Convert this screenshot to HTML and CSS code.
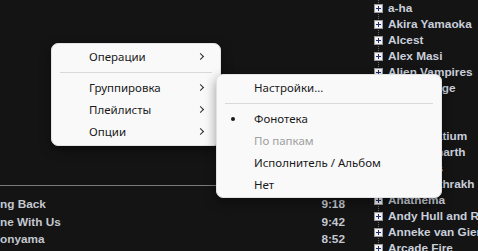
FILE: index.html
```html
<!DOCTYPE html>
<html lang="ru">
<head>
    <meta charset="UTF-8">
    <title>Фонотека</title>
    <link rel="stylesheet" href="styles.css">
</head>
<body>
    <div class="player">
        <div class="tracks">
            <div class="tracks-top"></div>
            <div class="track-row"><span class="track-title">ng Back</span><span class="track-time">9:18</span></div>
            <div class="track-row"><span class="track-title">ne With Us</span><span class="track-time">9:42</span></div>
            <div class="track-row"><span class="track-title">onyama</span><span class="track-time">8:52</span></div>
        </div>

        <div class="tree">
            <div class="tree-row"><span class="expander"></span>a-ha</div>
            <div class="tree-row"><span class="expander"></span>Akira Yamaoka</div>
            <div class="tree-row"><span class="expander"></span>Alcest</div>
            <div class="tree-row"><span class="expander"></span>Alex Masi</div>
            <div class="tree-row"><span class="expander"></span>Alien Vampires</div>
            <div class="tree-row"><span class="expander"></span>Alter Bridge</div>
            <div class="tree-row"><span class="expander"></span>Amatory</div>
            <div class="tree-row"><span class="expander"></span>Ambeon</div>
            <div class="tree-row"><span class="expander"></span>Amber Latium</div>
            <div class="tree-row"><span class="expander"></span>Amon Amarth</div>
            <div class="tree-row"><span class="expander"></span>Amorphis</div>
            <div class="tree-row"><span class="expander"></span>Anaal Nathrakh</div>
            <div class="tree-row"><span class="expander"></span>Anathema</div>
            <div class="tree-row"><span class="expander"></span>Andy Hull and Robert McDowell</div>
            <div class="tree-row"><span class="expander"></span>Anneke van Giersbergen</div>
            <div class="tree-row"><span class="expander"></span>Arcade Fire</div>
        </div>
    </div>

    <div class="menu menu-main">
        <div class="menu-item">Операции<span class="chevron"></span></div>
        <div class="menu-sep"></div>
        <div class="menu-item">Группировка<span class="chevron"></span></div>
        <div class="menu-item">Плейлисты<span class="chevron"></span></div>
        <div class="menu-item">Опции<span class="chevron"></span></div>
    </div>

    <div class="menu menu-sub">
        <div class="menu-item">Настройки...</div>
        <div class="menu-sep"></div>
        <div class="menu-item checked">Фонотека</div>
        <div class="menu-item disabled">По папкам</div>
        <div class="menu-item">Исполнитель / Альбом</div>
        <div class="menu-item">Нет</div>
    </div>
</body>
</html>
```

FILE: styles.css
```css
body {
    margin: 0;
    padding: 0;
    background-color: #141414;
    width: 478px;
    height: 251px;
    overflow: hidden;
    position: relative;
}

.player {
    display: flex;
    height: 100%;
}

.tracks {
    width: 360px;
    flex-shrink: 0;
    display: flex;
    flex-direction: column;
    font-family: "Liberation Sans", Arial, sans-serif;
    font-weight: bold;
    font-size: 11.8px;
    color: #c3c7cf;
}

.tracks-top {
    height: 185px;
    border-bottom: 1px solid #7a7a7a;
    margin-bottom: 10px;
    margin-right: 10px;
}

.track-row {
    display: flex;
    justify-content: space-between;
    height: 17.5px;
    line-height: 17.5px;
    padding-right: 15px;
}

.tree {
    flex: 1;
    min-width: 0;
    overflow: hidden;
    position: relative;
    padding-left: 14px;
    font-family: "Liberation Sans", Arial, sans-serif;
    font-weight: bold;
    font-size: 11.8px;
    color: #c9cfdb;
    white-space: nowrap;
}

.tree::before {
    content: '';
    position: absolute;
    left: 18px;
    top: 0;
    bottom: 0;
    border-left: 1px dotted #6a6a6a;
}

.tree-row {
    position: relative;
    display: flex;
    align-items: center;
    height: 16px;
    gap: 5px;
}

.expander {
    position: relative;
    width: 7px;
    height: 7px;
    border: 1px solid #9a9a9a;
    background-color: #f2f2f2;
    flex-shrink: 0;
}

.expander::before,
.expander::after {
    content: '';
    position: absolute;
    background-color: #1c2f6e;
}

.expander::before {
    left: 1px;
    top: 3px;
    width: 5px;
    height: 1px;
}

.expander::after {
    left: 3px;
    top: 1px;
    width: 1px;
    height: 5px;
}

.menu {
    position: absolute;
    box-sizing: border-box;
    background-color: #f9f9f9;
    border: 1px solid #e3e3e3;
    border-radius: 7px;
    padding: 2px 0;
    font-family: "Noto Sans", "Open Sans", sans-serif;
    font-size: 11.5px;
    color: #1a1a1a;
    box-shadow: 0 4px 12px rgba(0, 0, 0, 0.4);
}

.menu-main {
    left: 51px;
    top: 43px;
    width: 170px;
    height: 103px;
}

.menu-sub {
    left: 216px;
    top: 74px;
    width: 226px;
    height: 124px;
}

.menu-item {
    position: relative;
    height: 22px;
    line-height: 22px;
    padding-left: 37px;
}

.menu-item.disabled {
    color: #a0a0a0;
}

.menu-item.checked::before {
    content: '';
    position: absolute;
    left: 14px;
    top: 9px;
    width: 4px;
    height: 4px;
    border-radius: 50%;
    background-color: #1a1a1a;
}

.chevron {
    position: absolute;
    right: 17px;
    top: 8px;
    width: 4px;
    height: 4px;
    border-top: 1px solid #2a2a2a;
    border-right: 1px solid #2a2a2a;
    transform: rotate(45deg);
}

.menu-sep {
    height: 1px;
    margin: 4px 8px;
    background-color: #d9d9d9;
}
```
